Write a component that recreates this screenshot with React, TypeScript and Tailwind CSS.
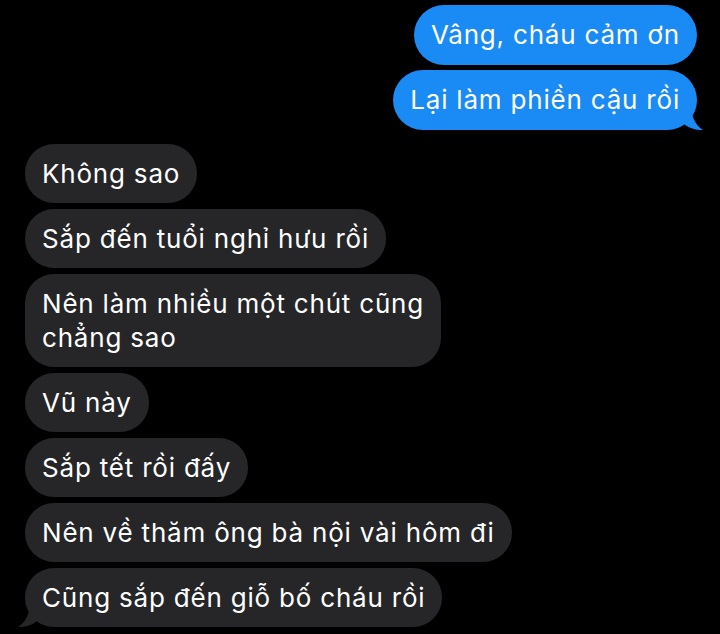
const sent = ["Vâng, cháu cảm ơn", "Lại làm phiền cậu rồi"];

const received: string[][] = [
  ["Không sao"],
  ["Sắp đến tuổi nghỉ hưu rồi"],
  ["Nên làm nhiều một chút cũng", "chẳng sao"],
  ["Vũ này"],
  ["Sắp tết rồi đấy"],
  ["Nên về thăm ông bà nội vài hôm đi"],
  ["Cũng sắp đến giỗ bố cháu rồi"],
];

function SentTail() {
  return (
    <svg
      className="absolute -right-[6px] bottom-0"
      width="24"
      height="26"
      viewBox="0 0 24 26"
    >
      <path d="M0 0 H12 C12 12 16 21 24 26 C16 26 10 24 5 20 C3 22 1 23 0 23 Z" fill="#1a8af5" />
    </svg>
  );
}

function ReceivedTail() {
  return (
    <svg
      className="absolute -left-[7px] bottom-0"
      width="24"
      height="26"
      viewBox="0 0 24 26"
    >
      <path d="M24 0 H12 C12 12 8 21 0 26 C8 26 14 24 19 20 C21 22 23 23 24 23 Z" fill="#262628" />
    </svg>
  );
}

export default function App() {
  return (
    <div
      className="min-h-screen w-[720px] h-[634px] overflow-hidden bg-black flex flex-col pt-[5px] text-white tracking-[0.8px]"
      style={{ fontFamily: "Inter, 'Noto Sans', sans-serif" }}
    >
      {/* tin nhắn gửi đi */}
      <div className="flex flex-col items-end gap-[5px] pr-[23px]">
        {sent.map((msg, i) => (
          <div
            key={msg}
            className="relative whitespace-nowrap rounded-[30px] bg-[#1a8af5] px-[17px] py-[13px] text-[26px] leading-[34px]"
          >
            {msg}
            {i === sent.length - 1 && <SentTail />}
          </div>
        ))}
      </div>

      {/* tin nhắn nhận được */}
      <div className="mt-[14px] flex flex-col items-start gap-[6px] pl-[25px]">
        {received.map((lines, i) => (
          <div
            key={i}
            className="relative whitespace-nowrap rounded-[29px] bg-[#262628] px-[17px] py-[12.5px] text-[26px] leading-[34px]"
          >
            {lines.map((line) => (
              <div key={line}>{line}</div>
            ))}
            {i === received.length - 1 && <ReceivedTail />}
          </div>
        ))}
      </div>
    </div>
  );
}
